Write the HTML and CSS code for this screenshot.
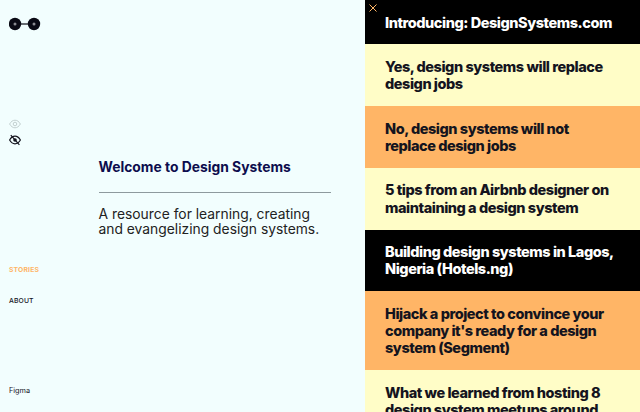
FILE: index.html
```html
<!DOCTYPE html>
<html lang="en">
<head>
<meta charset="utf-8">
<title>Design Systems</title>
<link rel="stylesheet" href="styles.css">
</head>
<body>
<div class="page">
  <aside class="rail">
    <div class="logo">
      <svg width="33" height="14" viewBox="0 0 33 14"><circle cx="6" cy="7" r="6.200" fill="#0a0a14"/><circle cx="25" cy="7" r="6.200" fill="#0a0a14"/><path d="M11 7h9" stroke="#0a0a14" stroke-width="1.200"/><circle cx="6" cy="7" r="1.500" fill="#8a8a90"/><circle cx="25" cy="7" r="1.500" fill="#8a8a90"/></svg>
    </div>
    <div class="modes">
      <svg width="12" height="10" viewBox="0 0 12 10"><path d="M.6 5C2 2.600 3.800 1.200 6 1.200S10 2.600 11.400 5C10 7.400 8.200 8.800 6 8.800S2 7.400.6 5z" fill="none" stroke="#bcc9c9" stroke-width=".9"/><circle cx="6" cy="5" r="1.800" fill="none" stroke="#bcc9c9" stroke-width=".9"/></svg>
      <svg width="12" height="12" viewBox="0 0 12 12"><path d="M.6 6C2 3.600 3.800 2.200 6 2.200S10 3.600 11.400 6C10 8.400 8.200 9.800 6 9.800S2 8.400.6 6z" fill="none" stroke="#14141e" stroke-width="1.200"/><circle cx="6" cy="6" r="1.800" fill="#14141e"/><path d="M1.800 1.200l8.600 9.600" stroke="#14141e" stroke-width="1.200"/></svg>
    </div>
    <nav class="nav">
      <a class="nav-link active">STORIES</a>
      <a class="nav-link">ABOUT</a>
    </nav>
    <div class="credit">Figma</div>
  </aside>
  <main class="intro">
    <h1 class="title">Welcome to Design Systems</h1>
    <p class="lede">A resource for learning, creating and evangelizing design systems.</p>
  </main>
  <section class="stories">
    <svg class="close" width="8" height="8" viewBox="0 0 8 8"><path d="M.5.5l7 7M7.500.5l-7 7" stroke="#ffb566" stroke-width="1"/></svg>
    <article class="card dark">Introducing: DesignSystems.com</article>
    <article class="card cream">Yes, design systems will replace design jobs</article>
    <article class="card orange">No, design systems will not replace design jobs</article>
    <article class="card cream">5 tips from an Airbnb designer on maintaining a design system</article>
    <article class="card dark">Building design systems in Lagos, Nigeria (Hotels.ng)</article>
    <article class="card orange">Hijack a project to convince your company it's ready for a design system (Segment)</article>
    <article class="card cream">What we learned from hosting 8 design system meetups around the world</article>
  </section>
</div>
</body>
</html>
```
FILE: styles.css
```css
* { box-sizing: border-box; }
html, body { margin: 0; height: 100%; overflow: hidden; }
body { background: #f2fefe; color: #14141e; font-family: "Inter", "Liberation Sans", sans-serif; }
.page { display: grid; grid-template-columns: 88px 277px 275px; height: 412px; }
.rail { display: flex; flex-direction: column; padding: 17px 0 0 9px; height: 412px; }
.logo { height: 14px; line-height: 0; }
.modes { display: flex; flex-direction: column; gap: 5px; margin-top: 88px; line-height: 0; }
.nav { display: flex; flex-direction: column; gap: 23px; margin-top: 120px; }
.nav-link { font-size: 6.800px; line-height: 8px; letter-spacing: .15px; font-weight: 500; }
.active { color: #ffb566; font-weight: 700; }
.credit { margin-top: auto; margin-bottom: 17px; font-size: 7.300px; line-height: 9px; }
.intro { padding: 159px 34px 0 10.500px; }
.title { margin: 0; padding-bottom: 16px; border-bottom: 1px solid #8e9a9e; font-size: 13.850px; line-height: 17px; font-weight: 700; color: #0d0d4d; }
.lede { margin: 14px 0 0; font-size: 13.850px; line-height: 15px; color: #222; }
.stories { position: relative; height: 412px; overflow: hidden; }
.close { position: absolute; left: 4px; top: 4px; }
.card { padding: 13.600px 20px; font-size: 14.500px; line-height: 17.250px; letter-spacing: -.45px; font-weight: 800; color: #14141e; }
.dark { background: #000; color: #fff; }
.cream { background: #fffdc7; }
.orange { background: #ffb566; }
```
